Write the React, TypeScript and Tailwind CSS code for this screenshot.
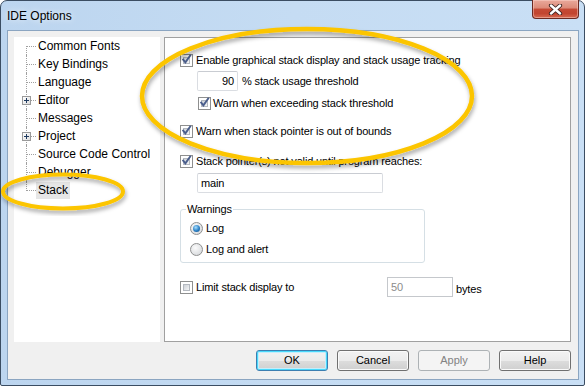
import React from "react";

type TreeItem = { label: string; plus?: boolean; selected?: boolean };

const TREE: TreeItem[] = [
  { label: "Common Fonts" },
  { label: "Key Bindings" },
  { label: "Language" },
  { label: "Editor", plus: true },
  { label: "Messages" },
  { label: "Project", plus: true },
  { label: "Source Code Control" },
  { label: "Debugger" },
  { label: "Stack", selected: true },
];

function TreeRow({ item, first, last }: { item: TreeItem; first: boolean; last: boolean }) {
  return (
    <div className="flex h-[18px] items-center">
      <div className="relative h-full w-[22px] shrink-0">
        {first ? (
          <div className="absolute left-[12px] top-[9px] bottom-0 border-l border-dotted border-[#a0a0a0]" />
        ) : last ? (
          <div className="absolute left-[12px] top-0 h-[10px] border-l border-dotted border-[#a0a0a0]" />
        ) : (
          <div className="absolute left-[12px] top-0 bottom-0 border-l border-dotted border-[#a0a0a0]" />
        )}
        <div className="absolute left-[13px] top-[9px] w-[9px] border-t border-dotted border-[#a0a0a0]" />
        {item.plus && (
          <div className="absolute left-[8px] top-[5px] flex h-[9px] w-[9px] items-center justify-center border border-[#9a9a9a] bg-[linear-gradient(135deg,#ffffff,#dcdcdc)]">
            <svg width="7" height="7" viewBox="0 0 7 7">
              <path d="M1 3.5H6M3.5 1V6" stroke="#1f3a5f" strokeWidth="1" shapeRendering="crispEdges" />
            </svg>
          </div>
        )}
      </div>
      <span
        className={
          item.selected
            ? "flex h-[17px] items-center bg-[#e6e6e6] px-[2px] leading-[17px]"
            : "px-[2px] leading-[17px]"
        }
      >
        {item.label}
      </span>
    </div>
  );
}

function CheckBox({ checked }: { checked?: boolean }) {
  return (
    <span className="relative flex h-[13px] w-[13px] shrink-0 border border-[#8e8f8f] bg-white p-[2px]">
      <span className="block h-full w-full border border-[#b4b9c0] bg-[linear-gradient(135deg,#cdd1d7,#f5f6f7)]" />
      {checked && (
        <svg className="absolute left-[-1px] top-[-2px]" width="13" height="13" viewBox="0 0 13 13">
          <path d="M3.2 6.6 L5.4 9.4 L10.2 2.6" fill="none" stroke="#4a5e8c" strokeWidth="1.9" strokeLinecap="square" />
        </svg>
      )}
    </span>
  );
}

function Radio({ checked }: { checked?: boolean }) {
  return (
    <span className="flex h-[13px] w-[13px] shrink-0 items-center justify-center rounded-full border border-[#8e8f8f] bg-[radial-gradient(circle_at_40%_35%,#fbfbfb,#d0d3d7)]">
      {checked && (
        <span className="h-[7px] w-[7px] rounded-full bg-[radial-gradient(circle_at_40%_35%,#a8e0ff,#2a7fc4_55%,#0f4a80)]" />
      )}
    </span>
  );
}

function Button({ label, primary, disabled }: { label: string; primary?: boolean; disabled?: boolean }) {
  if (disabled) {
    return (
      <div className="flex h-[21px] w-[72px] items-center justify-center rounded-[3px] border border-[#adb2b5] bg-[#f4f4f4] text-[#838383]">
        {label}
      </div>
    );
  }
  if (primary) {
    return (
      <div className="flex h-[21px] w-[72px] items-center justify-center rounded-[3px] border border-[#3c7fb1] bg-[linear-gradient(#f2f2f2,#ebebeb_50%,#dddddd_50%,#cfcfcf)] shadow-[inset_0_0_0_1px_#48d8fb,inset_0_0_0_2px_#c3eefc]">
        {label}
      </div>
    );
  }
  return (
    <div className="flex h-[21px] w-[72px] items-center justify-center rounded-[3px] border border-[#707070] bg-[linear-gradient(#f2f2f2,#ebebeb_50%,#dddddd_50%,#cfcfcf)] shadow-[inset_0_0_0_1px_#fafafa]">
      {label}
    </div>
  );
}

export default function App() {
  return (
    <div className="relative h-[387px] w-[586px] overflow-hidden bg-white font-['Liberation_Sans',Arial,sans-serif] text-[11px] text-black">
      {/* window */}
      <div className="flex h-[386px] w-[585px] flex-col rounded-t-[7px] rounded-b-[2px] border border-[#3b4d62] bg-[linear-gradient(90deg,#bcd5ef,#c5dcf3_50%,#c9dff5)] pl-[6px] pr-[5px] pb-[5px]">
        {/* title bar */}
        <div className="flex h-[29px] shrink-0 items-start justify-between">
          <div className="pt-[6px] text-[12px] leading-[18px] text-black [text-shadow:0_0_6px_#ffffff]">IDE Options</div>
          <div className="-mt-[1px] flex h-[19px] w-[47px] items-center justify-center rounded-b-[4px] border border-t-0 border-[#6b2a22] bg-[linear-gradient(#e9a99b,#dc8a78_45%,#c54a35_50%,#c24530_75%,#d66a52)] shadow-[inset_0_0_0_1px_rgba(255,220,210,0.45)]">
            <svg width="15" height="11" viewBox="0 0 15 11">
              <path d="M3 1.5L12 9.5M12 1.5L3 9.5" stroke="#3a2220" strokeWidth="4.2" strokeLinecap="round" />
              <path d="M3 1.5L12 9.5M12 1.5L3 9.5" stroke="#ffffff" strokeWidth="2.4" strokeLinecap="round" />
            </svg>
          </div>
        </div>

        {/* client area */}
        <div className="flex flex-1 flex-col border border-[#8ba5c1] bg-[#f0f0f0] pl-[6px] pr-[7px] pt-[6px] pb-[8px]">
          <div className="flex h-[305px] gap-[4px]">
            {/* tree */}
            <div className="w-[146px] shrink-0 bg-white pt-[0px] text-[12px]">
              {TREE.map((item, i) => (
                <TreeRow key={item.label} item={item} first={i === 0} last={i === TREE.length - 1} />
              ))}
            </div>

            {/* options panel */}
            <div className="flex flex-1 flex-col border border-[#a0a0a0] bg-white pl-[15px] pt-[14px] tracking-[-0.15px]">
              <div className="flex h-[16px] items-center gap-[3px]">
                <CheckBox checked />
                <span>Enable graphical stack display and stack usage tracking</span>
              </div>
              <div className="ml-[17px] mt-[3px] flex items-center gap-[4px]">
                <div className="flex h-[20px] w-[41px] items-center justify-end rounded-[2px] border border-[#dadde2] border-t-[#c9ccd2] pr-[3px]">
                  90
                </div>
                <span>% stack usage threshold</span>
              </div>
              <div className="ml-[18px] mt-[4px] flex h-[16px] items-center gap-[2px]">
                <CheckBox checked />
                <span>Warn when exceeding stack threshold</span>
              </div>
              <div className="mt-[12px] flex h-[16px] items-center gap-[3px]">
                <CheckBox checked />
                <span>Warn when stack pointer is out of bounds</span>
              </div>
              <div className="mt-[14px] flex h-[16px] items-center gap-[3px]">
                <CheckBox checked />
                <span>Stack pointer(s) not valid until program reaches:</span>
              </div>
              <div className="ml-[17px] mt-[4px] flex h-[20px] w-[186px] items-center rounded-[2px] border border-[#dadde2] border-t-[#c9ccd2] pl-[3px]">
                main
              </div>

              <fieldset className="mt-[8px] w-[245px] rounded-[3px] border border-[#d5dfe5] pb-[5px] pl-[9px]">
                <legend className="ml-[-4px] px-[1px] leading-[16px]">Warnings</legend>
                <div className="mt-[3px] flex h-[16px] items-center gap-[3px]">
                  <Radio checked />
                  <span>Log</span>
                </div>
                <div className="mt-[5px] flex h-[16px] items-center gap-[3px]">
                  <Radio />
                  <span>Log and alert</span>
                </div>
              </fieldset>

              <div className="mt-[14px] flex h-[20px] items-center">
                <div className="flex w-[207px] items-center gap-[3px]">
                  <CheckBox />
                  <span>Limit stack display to</span>
                </div>
                <div className="flex h-[20px] w-[66px] items-center border border-[#c5c8cc] pl-[3px] text-[#8c8c8c]">
                  50
                </div>
                <span className="ml-[3px] mt-[4px]">bytes</span>
              </div>
            </div>
          </div>

          {/* buttons */}
          <div className="mt-[8px] flex justify-end gap-[9px]">
            <Button label="OK" primary />
            <Button label="Cancel" />
            <Button label="Apply" disabled />
            <Button label="Help" />
          </div>
        </div>
      </div>

      {/* annotation ellipses */}
      <svg className="pointer-events-none absolute left-0 top-0" width="586" height="387" viewBox="0 0 586 387">
        <defs>
          <filter id="sh" x="-20%" y="-20%" width="140%" height="140%">
            <feDropShadow dx="1" dy="3" stdDeviation="2" floodColor="#000000" floodOpacity="0.35" />
          </filter>
        </defs>
        <ellipse cx="307" cy="96" rx="165" ry="67" fill="none" stroke="#fcc500" strokeWidth="4.5" filter="url(#sh)" />
        <ellipse cx="63" cy="191.5" rx="60" ry="17" fill="none" stroke="#fcc500" strokeWidth="4" filter="url(#sh)" />
      </svg>
    </div>
  );
}
